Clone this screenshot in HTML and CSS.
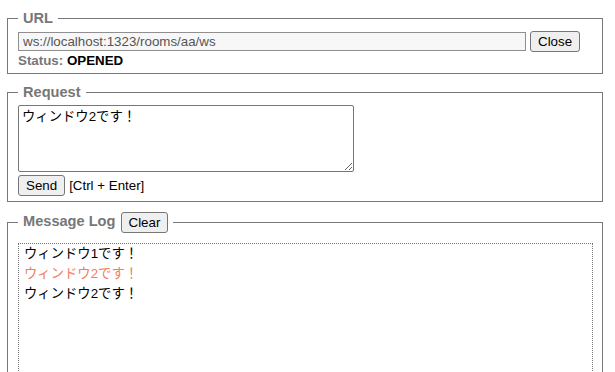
FILE: index.html
```html
<!DOCTYPE html>
<html lang="ja">
<head>
<meta charset="utf-8">
<title>WebSocket Client</title>
<link rel="stylesheet" href="styles.css">
</head>
<body>
<fieldset class="panel">
  <legend class="panel-title">URL</legend>
  <div class="url-row">
    <input class="url-input" type="text" value="ws://localhost:1323/rooms/aa/ws">
    <button class="btn" type="button">Close</button>
  </div>
  <div class="status"><span class="status-label">Status:</span> <span class="status-value">OPENED</span></div>
</fieldset>

<fieldset class="panel">
  <legend class="panel-title">Request</legend>
  <textarea class="request-text">ウィンドウ2です！</textarea>
  <div class="send-row">
    <button class="btn" type="button">Send</button>
    <span class="hint">[Ctrl + Enter]</span>
  </div>
</fieldset>

<fieldset class="panel panel-log">
  <legend class="panel-title">Message Log <button class="btn" type="button">Clear</button></legend>
  <div class="log">
    <div class="log-line">ウィンドウ1です！</div>
    <div class="log-line log-self">ウィンドウ2です！</div>
    <div class="log-line">ウィンドウ2です！</div>
  </div>
</fieldset>
</body>
</html>
```

FILE: styles.css
```css
html, body {
  margin: 0;
  padding: 0;
  background: #fff;
}
body {
  padding: 10px 12px 0 7px;
  font-family: "Liberation Sans", Arial, "Noto Sans CJK JP", sans-serif;
  font-size: 13.33px;
  color: #000;
}
.panel {
  margin: 0 0 10px 0;
  border: 1px solid #777;
  padding: 5px 9px 5px 10px;
  min-width: 0;
}
.panel-title {
  padding: 0 5px;
  font-weight: bold;
  font-size: 14.6px;
  color: #777;
}
.url-row {
  display: flex;
  align-items: center;
  gap: 4px;
}
.url-input {
  width: 508px;
  height: 19px;
  box-sizing: border-box;
  border: 1px solid #8f8f8f;
  background: #f7f7f7;
  padding: 0 4px;
  font-family: "Liberation Sans", Arial, sans-serif;
  font-size: 13.33px;
  color: #555;
  margin: 0;
}
.btn {
  font-family: "Liberation Sans", Arial, sans-serif;
  font-size: 13.33px;
  color: #000;
  background: #efefef;
  border: 1px solid #767676;
  border-radius: 3px;
  padding: 0 7px;
  height: 21px;
  margin: 0;
}
.status {
  margin-top: 1px;
  font-weight: bold;
  line-height: 15px;
}
.status-label {
  color: #777;
}
.request-text {
  display: block;
  width: 336px;
  height: 67px;
  box-sizing: border-box;
  margin: 0;
  border: 1px solid #767676;
  border-radius: 2px;
  padding: 2px 3px;
  font-family: "Liberation Sans", "Noto Sans CJK JP", sans-serif;
  font-size: 13.33px;
  line-height: 17px;
  resize: both;
}
.send-row {
  margin-top: 3px;
  display: flex;
  align-items: center;
  gap: 4px;
}
.panel-log .panel-title .btn {
  margin-left: 1px;
  vertical-align: middle;
}
.log {
  margin-top: 5px;
  border: 1px dotted #777;
  height: 160px;
  padding: 0 5px;
  font-family: "Liberation Sans", "Noto Sans CJK JP", sans-serif;
  font-size: 13.33px;
  line-height: 20px;
}
.log-self {
  color: #f47b5c;
}
```
